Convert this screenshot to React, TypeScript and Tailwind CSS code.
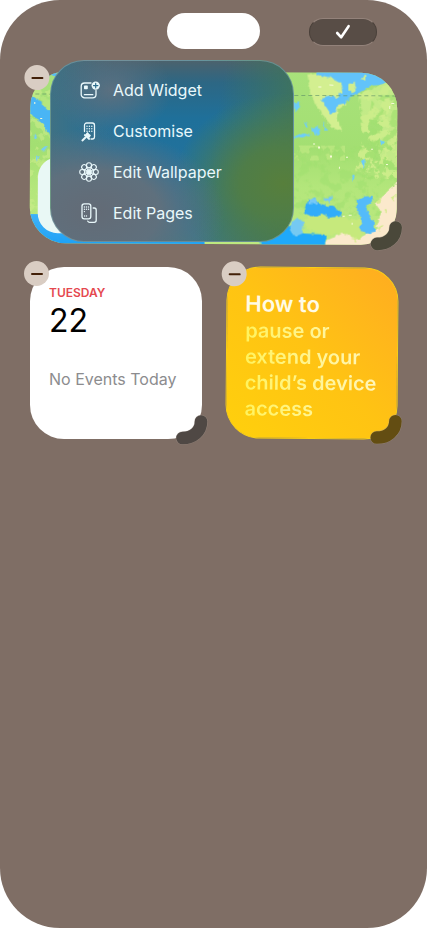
import type { ReactNode } from "react"

const ICON_PROPS = {
  viewBox: "0 0 24 24",
  fill: "none",
  stroke: "currentColor",
  strokeLinecap: "round",
  strokeLinejoin: "round",
  className: "size-6 shrink-0",
  "aria-hidden": true,
} as const

function AddWidgetIcon() {
  return (
    <svg {...ICON_PROPS} strokeWidth={1.3}>
      <path d="M14 5H7.600A3.400 3.400 0 0 0 4.200 8.400V16.400A3.400 3.400 0 0 0 7.600 19.800H15.600A3.400 3.400 0 0 0 19 16.400V12.500" />
      <rect x="7" y="7.600" width="3.800" height="3.600" rx="0.800" fill="currentColor" stroke="none" />
      <path d="M7.400 16.700H15.800" />
      <circle cx="18.700" cy="7.600" r="4.200" fill="currentColor" stroke="none" />
      <path d="M18.700 5.400V9.800M16.500 7.600H20.900" stroke="#2d6c8c" strokeWidth={1.200} />
    </svg>
  )
}

function CustomiseIcon() {
  return (
    <svg {...ICON_PROPS} strokeWidth={1.3}>
      <path d="M7.500 12.500V6.200A2.200 2.200 0 0 1 9.700 4H15.300A2.200 2.200 0 0 1 17.500 6.200V17.800A2.200 2.200 0 0 1 15.300 20H14" />
      <path d="M10 7.200H15M10 9.700H15M10 12.200H15" strokeWidth={1.500} strokeDasharray="0.010 2.400" />
      <path d="M7.800 16 12.200 20" strokeWidth={1.700} />
      <path d="M9 15.600 10.400 13.800 11.600 15.200 13.200 16.400 11.800 18.400Z" fill="currentColor" />
      <path d="M8.400 18.600 5.400 21.400" strokeWidth={2} />
    </svg>
  )
}

function WallpaperIcon() {
  return (
    <svg {...ICON_PROPS} strokeWidth={1.1}>
      {[0, 45, 90, 135, 180, 225, 270, 315].map((angle) => (
        <g key={angle} transform={`rotate(${angle} 12 12)`}>
          <circle cx="12" cy="5.200" r="2.500" />
          <path d="M12 12 10.700 7.400M12 12 13.300 7.400" strokeWidth={0.9} />
        </g>
      ))}
      <circle cx="12" cy="12" r="2" />
    </svg>
  )
}

function PagesIcon() {
  return (
    <svg {...ICON_PROPS} strokeWidth={1.3}>
      <rect x="5" y="2.800" width="8.800" height="15" rx="2.200" />
      <path d="M7.400 6H11.800M7.400 8.300H11.800M7.400 10.600H9" strokeWidth={1.400} strokeDasharray="0.010 2.050" />
      <path d="M7.600 15H11.400" strokeWidth={1.300} strokeDasharray="0.010 1.900" />
      <path d="M16.200 7H17.200A2 2 0 0 1 19.200 9V19.300A2 2 0 0 1 17.200 21.300H12.600A2 2 0 0 1 10.800 20.200" />
    </svg>
  )
}

const MENU_ITEMS = [
  { label: "Add Widget", icon: AddWidgetIcon },
  { label: "Customise", icon: CustomiseIcon },
  { label: "Edit Wallpaper", icon: WallpaperIcon },
  { label: "Edit Pages", icon: PagesIcon },
]

function EditMenu() {
  return (
    <div
      role="menu"
      className="absolute -top-3 left-5 w-[244px] overflow-hidden rounded-[34px] border border-[#7fa8b0]/60 bg-[radial-gradient(60px_48px_at_25%_16%,#5b7080_0%,#5b708000_100%),radial-gradient(130px_84px_at_18%_84%,#636b76_0%,#5f707d_50%,#5f707d00_100%),radial-gradient(110px_90px_at_96%_68%,#577f3c_0%,#4f7d48_40%,#4f7d4800_100%),linear-gradient(100deg,#3f776000_64%,#417558_96%),linear-gradient(to_right,#3f7184_0%,#3f718400_26%),linear-gradient(to_bottom,#4b626d_0%,#2d6784_12%,#1f709a_32%,#22729d_60%,#2b7396_84%,#3d7888_100%)] py-2"
    >
      {MENU_ITEMS.map((item) => {
        const Icon = item.icon

        return (
          <button
            key={item.label}
            type="button"
            role="menuitem"
            className="flex h-[41px] w-full items-center gap-3 pl-[26px] text-base text-[#e9f8fb]"
          >
            <Icon />
            {item.label}
          </button>
        )
      })}
    </div>
  )
}

function MapArt() {
  return (
    <svg
      viewBox="30 72 367 172"
      preserveAspectRatio="xMaxYMid slice"
      className="size-full rounded-[36px]"
      role="img"
      aria-label="Map"
    >
      <defs>
        <filter id="coast" x="-5%" y="-5%" width="110%" height="110%" colorInterpolationFilters="sRGB">
          <feTurbulence type="fractalNoise" baseFrequency="0.25" numOctaves="2" seed="4" />
          <feDisplacementMap in="SourceGraphic" scale="4" xChannelSelector="R" yChannelSelector="G" />
        </filter>
        <filter id="fields" x="0" y="0" width="100%" height="100%" colorInterpolationFilters="sRGB">
          <feTurbulence type="fractalNoise" baseFrequency="0.1" numOctaves="4" seed="11" result="noise" />
          <feColorMatrix in="noise" type="matrix" values="0 0 0 0 0.8  0 0 0 0 0.93  0 0 0 0 0.54  0 14 0 0 -7" result="blots" />
          <feComposite in="blots" in2="SourceGraphic" operator="in" />
        </filter>
        <filter id="woods" x="0" y="0" width="100%" height="100%" colorInterpolationFilters="sRGB">
          <feTurbulence type="fractalNoise" baseFrequency="0.1" numOctaves="4" seed="27" result="noise" />
          <feColorMatrix in="noise" type="matrix" values="0 0 0 0 0.63  0 0 0 0 0.88  0 0 0 0 0.44  10 0 0 0 -5.2" result="blots" />
          <feComposite in="blots" in2="SourceGraphic" operator="in" />
        </filter>
        <linearGradient id="land" x1="0" y1="0" x2="0" y2="1">
          <stop offset="0" stopColor="#a9e27c" />
          <stop offset="0.45" stopColor="#a3df72" />
          <stop offset="0.65" stopColor="#b3e67b" />
          <stop offset="1" stopColor="#bfea81" />
        </linearGradient>
        <linearGradient id="sea" x1="0" y1="0" x2="0" y2="1">
          <stop offset="0" stopColor="#3fb2f8" />
          <stop offset="1" stopColor="#109bf5" />
        </linearGradient>
      </defs>
      <rect x="20" y="62" width="390" height="192" fill="url(#land)" />
      <path d="M360 94 384 82 402 78V165L388 176 378 150 384 120 362 118Z" fill="#cdee8e" opacity="0.75" filter="url(#coast)" />
      <path d="M358 92 402 80V178H350L362 140Z" filter="url(#fields)" />
      <path d="M290 146H402V215H290Z" filter="url(#woods)" opacity="0.6" />
      <path d="M372 94H402V178H362Z" filter="url(#woods)" opacity="0.7" />
      <path d="M290 145H345V160H290Z" filter="url(#fields)" opacity="0.5" />
      <path d="M30 84H52V216H30Z" filter="url(#fields)" opacity="0.6" />
      <g filter="url(#coast)">
        <path d="M22 66H56V76L44 78 30 80Z" fill="#58bdf8" />
        <path d="M28 94 38 101 48 108 56 112V138L47 133 44 126 34 118 28 112Z" fill="#49b5f5" />
        <path d="M38 96 50 101 56 114 46 110Z" fill="#b4e67e" />
        <path d="M35 134 37 139 34 141ZM42 149 48 147 44 153ZM36 158 40 157 37 162Z" fill="#78cef0" />
        <path d="M307 74 322 73 345 78 350 89 344 97 346 103 337 110 338 121 343 131 331 127 325 117 318 109 310 93Z" fill="#d3ef90" />
        <path d="M318 66H388L390 80 380 84 370 85 362 90 357 93 350 97 344 103 338 104 336 111 331 114 325 105 321 99 328 95 337 97 342 90 340 82 330 77 316 74Z" fill="#62c3fa" />
        <path d="M348 84 354 81 356 87 352 93 348 90ZM360 78 366 74 366 80Z" fill="#d0ee8e" />
        <path d="M293 103 298 101 300 106 295 112ZM311 127 318 126 320 133 315 135ZM292 137 303 132 311 134 303 138ZM323 121 328 130 325 130ZM303 120 309 127 306 127ZM380 139 384 141 381 145ZM361 160 365 158 364 168ZM352 176 355 174 353 182Z" fill="#6dcdf8" />
        <path d="M386 192 404 176V258H324L326 240 344 232 360 237 376 229 382 212 376 203Z" fill="#fbe9cc" />
        <path d="M304 220 312 212 334 211 351 219 372 216 367 228 360 239 344 233 328 235 307 228Z" fill="#c6e97c" />
        <path d="M305 213 308 200 314 197 320 203 327 205 336 207 342 212 340 216 330 217 322 213 315 217Z" fill="#31acf9" />
        <path d="M308 204 310 198 316 197 318 203ZM323 199 333 195 330 203Z" fill="#76c8f6" />
        <path d="M357 200 363 196 373 195 372 202 366 206 369 214 375 222 375 231 367 233 360 229 362 220 357 207Z" fill="#54bbfa" />
        <path d="M260 236 276 230 292 225 304 233 326 234 325 256H262Z" fill="#1fa9fa" />
        <path d="M292 222 298 217 304 222 303 233 296 236 290 230Z" fill="#75c9f2" />
        <path d="M20 215H40L54 226 76 232 206 236V258H20Z" fill="url(#sea)" />
        <path d="M384 209 388 208 386 213ZM392 196 396 194 394 200ZM376 201 382 197 380 203ZM378 226 384 224 380 230ZM352 238 358 236 356 242Z" fill="#d5eb8d" />
      </g>
      <path
        d="M318 146h2v2h-2zM330 155h2v2h-2zM313 143h2v1h-2zM346 156h2v1h-2zM339 166h1v2h-1zM318 86h3v1h-3zM329 84h4v1h-4zM389 105h1v3h-1zM391 102h3v1h-3zM343 215h2v1h-2zM349 214h3v1h-3zM352 222h1v2h-1zM386 163h2v1h-2zM371 148h2v1h-2zM34 103h1v2h-1zM40 119h2v1h-2z"
        fill="#f7fbd9"
      />
      <path d="M28 95H400" stroke="#5a8e65" strokeOpacity="0.6" strokeWidth="1" strokeDasharray="4 3" />
      <rect x="38" y="158" width="90" height="76" rx="20" fill="#e9f8f5" />
    </svg>
  )
}

function RemoveButton({ label }: { label: string }) {
  return (
    <button
      type="button"
      aria-label={label}
      className="absolute -top-1.5 -left-1.5 flex size-[25px] items-center justify-center rounded-full bg-[#d9cdc3]"
    >
      <span className="h-0.5 w-3 rounded-full bg-[#422008]" />
    </button>
  )
}

function ResizeHandle({ color }: { color: string }) {
  return (
    <svg viewBox="0 0 34 32" className="absolute -right-1.5 -bottom-1.5 h-8 w-[34px]" aria-hidden="true">
      <path d="M27 8.500C27 18.500 19 25 8.500 25" fill="none" stroke="#a89b92" strokeOpacity="0.500" strokeWidth="13.500" strokeLinecap="round" />
      <path d="M27 8.500C27 18.500 19 25 8.500 25" fill="none" stroke={color} strokeWidth="12.600" strokeLinecap="round" />
    </svg>
  )
}

type WidgetProps = {
  name: string
  className: string
  handleColor: string
  children: ReactNode
}

function Widget({ name, className, handleColor, children }: WidgetProps) {
  return (
    <section aria-label={name} className={`relative ${className}`}>
      {children}
      <RemoveButton label={`Remove ${name}`} />
      <ResizeHandle color={handleColor} />
    </section>
  )
}

export default function App() {
  return (
    <div className="min-h-screen bg-white font-['Inter',sans-serif]">
      <div className="min-h-screen rounded-[60px] bg-[#7f6e65]">
        <header className="grid h-[72px] grid-cols-3 items-start px-[50px] pt-[13px]">
          <div className="col-start-2 h-9 w-[93px] justify-self-center rounded-full bg-white" />
          <button
            type="button"
            aria-label="Done"
            className="mt-[5px] flex h-7 w-[68px] items-center justify-center justify-self-end rounded-full border border-[#93827a] border-x-[#4a403a] bg-[#584d46]"
          >
            <svg viewBox="0 0 16 16" className="size-4" aria-hidden="true">
              <path d="M2.200 9 6.200 13.300 13.600 2.200" fill="none" stroke="white" strokeWidth="2.600" strokeLinecap="round" strokeLinejoin="round" />
            </svg>
          </button>
        </header>

        <main className="px-[30px]">
          <div className="relative">
            <Widget name="Maps" className="h-[172px] rotate-[0.3deg]" handleColor="#4a483a">
              <MapArt />
            </Widget>
            <EditMenu />
          </div>

          <div className="mt-[23px] grid grid-cols-2 gap-6">
            <Widget name="Calendar" className="aspect-square rounded-[34px] bg-white px-[19px] pt-[18px]" handleColor="#4f4844">
              <p className="text-xs leading-4 font-semibold text-[#e5484f]">TUESDAY</p>
              <p className="text-[32px] leading-10 text-black">22</p>
              <p className="mt-7 text-base leading-5 whitespace-nowrap text-[#8c8c8e]">No Events Today</p>
            </Widget>

            <Widget
              name="Tips"
              className="aspect-square rotate-[0.5deg] rounded-[34px] border border-[#f8cf18] bg-linear-to-tr from-[#ffd00c] via-[#ffc313] to-[#ffac20] px-[18px] pt-[22px]"
              handleColor="#634d12"
            >
              <h2 className="text-[22px] leading-7 font-semibold text-[#fffbe6]">How to</h2>
              <p className="bg-linear-to-r from-[#fff35c] to-[#fff6bd] bg-clip-text text-[20px] leading-[26px] font-semibold whitespace-nowrap text-transparent">
                pause or
                <br />
                extend your
                <br />
                child’s device
                <br />
                access
              </p>
            </Widget>
          </div>
        </main>
      </div>
    </div>
  )
}
